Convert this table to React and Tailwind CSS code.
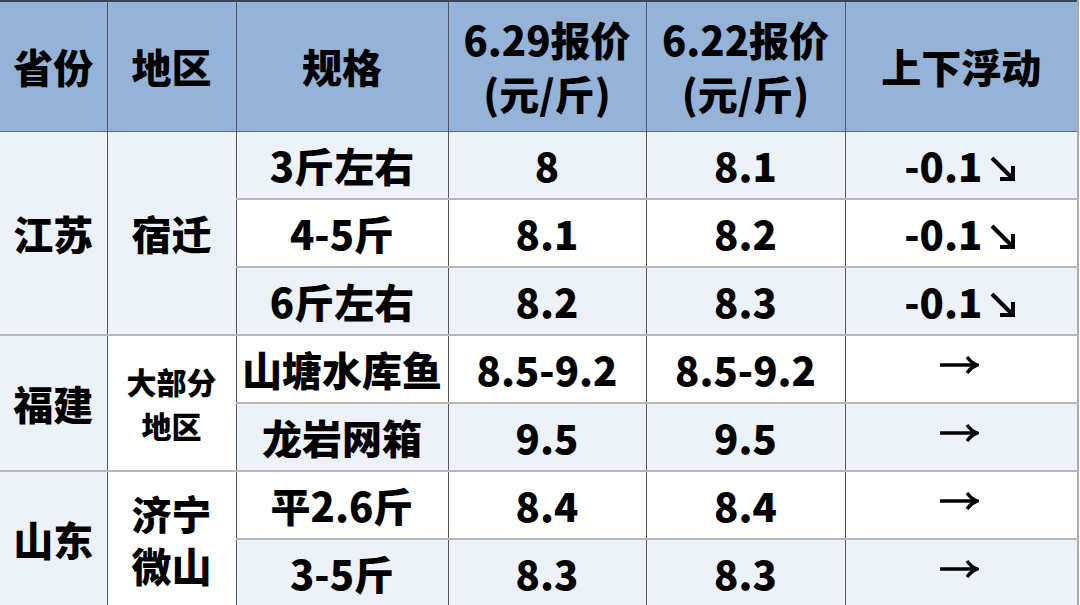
import React from 'react';

const font = { fontFamily: '"Noto Sans CJK SC", "Noto Sans", sans-serif' };

const rows = [
    { spec: '3斤左右', a: '8', b: '8.1', d: '-0.1', down: true },
    { spec: '4-5斤', a: '8.1', b: '8.2', d: '-0.1', down: true },
    { spec: '6斤左右', a: '8.2', b: '8.3', d: '-0.1', down: true },
    { spec: '山塘水库鱼', a: '8.5-9.2', b: '8.5-9.2' },
    { spec: '龙岩网箱', a: '9.5', b: '9.5' },
    { spec: '平2.6斤', a: '8.4', b: '8.4' },
    { spec: '3-5斤', a: '8.3', b: '8.3' },
];

const groups = {
    0: { prov: '江苏', area: '宿迁', span: 3, areaBg: 'bg-[#edf2f9]', small: false },
    3: { prov: '福建', area: '大部分\n地区', span: 2, areaBg: 'bg-white', small: true },
    5: { prov: '山东', area: '济宁\n微山', span: 2, areaBg: 'bg-white', small: false },
};

const App = () => {
    const th = 'border-r border-[#4a5868] text-center font-black text-[40px] leading-[54px] text-black';
    const td = 'border-r border-r-[#555] border-b-2 border-b-[#b4b8bd] text-center font-black text-black';

    return (
        <div className="w-[1080px] h-[605px] overflow-hidden bg-white" style={font}>
            <table className="w-[1078px] border-collapse table-fixed border-t-2 border-t-[#3b4654] border-r-2 border-r-[#a8abb0]">
                <colgroup>
                    <col className="w-[107px]" />
                    <col className="w-[129px]" />
                    <col className="w-[212px]" />
                    <col className="w-[198px]" />
                    <col className="w-[199px]" />
                    <col className="w-[233px]" />
                </colgroup>
                <thead>
                    <tr className="h-[130px] bg-[#95b3d7] border-b border-b-[#5d6b7b]">
                        <th className={th}>省份</th>
                        <th className={th}>地区</th>
                        <th className={th}>规格</th>
                        <th className={th}>6.29报价<br />(元/斤)</th>
                        <th className={th}>6.22报价<br />(元/斤)</th>
                        <th className={th + ' border-r-0'}>上下浮动</th>
                    </tr>
                </thead>
                <tbody>
                    {rows.map((r, i) => {
                        const g = groups[i];
                        const bg = i % 2 === 0 ? 'bg-[#edf2f9]' : 'bg-white';
                        return (
                            <tr key={i} className="h-[68px]">
                                {g && (
                                    <>
                                        <td rowSpan={g.span} className={`${td} bg-[#edf2f9] text-[40px] leading-[50px]`}>
                                            {g.prov}
                                        </td>
                                        <td
                                            rowSpan={g.span}
                                            className={`${td} ${g.areaBg} whitespace-pre-line ${g.small ? 'text-[30px] leading-[44px]' : 'text-[40px] leading-[52px]'}`}
                                        >
                                            {g.area}
                                        </td>
                                    </>
                                )}
                                <td className={`${td} ${bg} text-[40px] leading-[50px]`}>{r.spec}</td>
                                <td className={`${td} ${bg} text-[40px] leading-[50px]`}>{r.a}</td>
                                <td className={`${td} ${bg} text-[40px] leading-[50px]`}>{r.b}</td>
                                <td className={`${td} border-r-0 ${bg} text-[40px] leading-[50px]`}>
                                    {r.down ? (
                                        <span className="inline-flex items-center justify-center">
                                            {r.d}
                                            <svg width="30" height="30" viewBox="0 0 30 30" className="ml-[6px] mt-[8px]">
                                                <path d="M4 4 L24 24" stroke="black" strokeWidth="4" />
                                                <path d="M12 25 L25 25 L25 12" fill="none" stroke="black" strokeWidth="4" />
                                            </svg>
                                        </span>
                                    ) : (
                                        <div className="flex items-center justify-center h-[50px] pb-[9px] pr-[4px]">
                                            <svg width="40" height="20" viewBox="0 0 40 20">
                                                <path d="M1 10 L37 10" stroke="black" strokeWidth="3.5" />
                                                <path d="M28 2 C31 6 34 8.5 38 10 C34 11.5 31 14 28 18" fill="none" stroke="black" strokeWidth="3.5" />
                                            </svg>
                                        </div>
                                    )}
                                </td>
                            </tr>
                        );
                    })}
                </tbody>
            </table>
        </div>
    );
};

export default App;
